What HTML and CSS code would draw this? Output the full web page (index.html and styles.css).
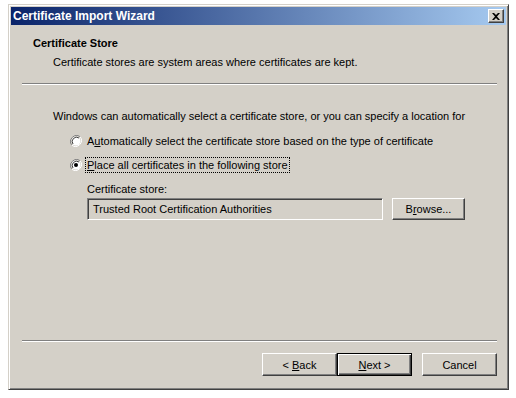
FILE: index.html
```html
<!DOCTYPE html>
<html lang="en">
<head>
    <meta charset="UTF-8">
    <title>Certificate Import Wizard</title>
    <link rel="stylesheet" href="styles.css">
</head>
<body>
<div class="window">
    <!-- Title bar -->
    <div class="titlebar">
        <span class="titlebar__text">Certificate Import Wizard</span>
        <button class="titlebar__close" type="button">
            <svg width="8" height="7" viewBox="0 0 8 7">
                <path d="M0 0h2l2 2 2-2h2L5 3.5 8 7H6L4 5 2 7H0l3-3.5z" fill="#000"/>
            </svg>
        </button>
    </div>

    <!-- Header -->
    <div class="header">
        <div class="header__title">Certificate Store</div>
        <div class="header__sub">Certificate stores are system areas where certificates are kept.</div>
    </div>
    <div class="groove"></div>

    <!-- Body -->
    <div class="content">
        <p class="content__text">Windows can automatically select a certificate store, or you can specify a location for</p>

        <div class="options">
            <label class="option">
                <svg class="radio" width="12" height="12" viewBox="0 0 12 12">
                    <path d="M10.2 1.8A6 6 0 0 0 1.8 10.2" stroke="#808080" fill="none"/>
                    <path d="M1.8 10.2A6 6 0 0 0 10.2 1.8" stroke="#fff" fill="none"/>
                    <circle cx="6" cy="6" r="4.5" fill="#fff"/>
                    <path d="M9 3A4.3 4.3 0 0 0 3 9" stroke="#404040" fill="none"/>
                </svg>
                <span class="option__label">A<u>u</u>tomatically select the certificate store based on the type of certificate</span>
            </label>
            <label class="option">
                <svg class="radio" width="12" height="12" viewBox="0 0 12 12">
                    <path d="M10.2 1.8A6 6 0 0 0 1.8 10.2" stroke="#808080" fill="none"/>
                    <path d="M1.8 10.2A6 6 0 0 0 10.2 1.8" stroke="#fff" fill="none"/>
                    <circle cx="6" cy="6" r="4.5" fill="#fff"/>
                    <path d="M9 3A4.3 4.3 0 0 0 3 9" stroke="#404040" fill="none"/>
                    <circle cx="6" cy="6" r="2" fill="#000"/>
                </svg>
                <span class="option__label option__label--focus"><u>P</u>lace all certificates in the following store</span>
            </label>
        </div>

        <div class="store">
            <div class="store__label">Certificate store:</div>
            <div class="store__row">
                <div class="field">Trusted Root Certification Authorities</div>
                <button class="btn btn--browse" type="button">B<u>r</u>owse...</button>
            </div>
        </div>
    </div>

    <!-- Footer -->
    <div class="footer">
        <div class="groove"></div>
        <div class="footer__buttons">
            <button class="btn" type="button">&lt; <u>B</u>ack</button>
            <button class="btn btn--default" type="button"><u>N</u>ext &gt;</button>
            <button class="btn btn--cancel" type="button">Cancel</button>
        </div>
    </div>
</div>
</body>
</html>
```

FILE: styles.css
```css
:root {
    /* COLORS */
    --face: #d4d0c8;
    --shadow: #808080;
    --dark: #404040;
    --light: #fff;
    --navy: #0a246a;
    --sky: #a6caf0;

    font-family: "Liberation Sans", Arial, sans-serif;
    font-size: 11px;
}

body {
    margin: 0;
    padding: 4px 0 0 8px;
    background-color: #fff;
    color: #000;
}

.window {
    background-color: var(--face);
    border: 1px solid;
    border-color: var(--face) var(--dark) var(--dark) var(--face);
    box-shadow: inset 1px 1px 0 var(--light), inset -1px -1px 0 var(--shadow);
    box-sizing: border-box;
    display: flex;
    flex-direction: column;
    height: 386px;
    padding: 2px;
    width: 501px;
}

.titlebar {
    align-items: center;
    background-image: linear-gradient(90deg, var(--navy) 0%, var(--sky) 100%);
    display: flex;
    height: 18px;
    justify-content: space-between;
    padding: 0 2px 0 2px;
}

.titlebar__text {
    color: #fff;
    font-size: 12px;
    font-weight: bold;
}

.titlebar__close {
    align-items: center;
    background-color: var(--face);
    border: 1px solid;
    border-color: var(--light) var(--dark) var(--dark) var(--light);
    box-shadow: inset -1px -1px 0 var(--shadow);
    display: flex;
    height: 14px;
    justify-content: center;
    padding: 0;
    width: 16px;
}

.header {
    padding: 12px 0 0 22px;
}

.header__title {
    font-weight: bold;
    line-height: 13px;
}

.header__sub {
    line-height: 13px;
    margin-top: 6px;
    padding-left: 20px;
}

.groove {
    border-top: 1px solid var(--shadow);
    border-bottom: 1px solid var(--light);
    margin: 14px 9px 0 11px;
}

.content {
    flex: 1;
    padding: 25px 0 0 42px;
}

.content__text {
    line-height: 13px;
    margin: 0;
}

.options {
    display: flex;
    flex-direction: column;
    gap: 8px;
    margin-top: 10px;
    padding-left: 17px;
}

.option {
    align-items: center;
    display: flex;
    gap: 3px;
    height: 16px;
}

.radio {
    flex: none;
}

.option__label {
    line-height: 14px;
    padding: 0 1px;
    border: 1px dotted transparent;
}

.option__label--focus {
    border-color: #000;
}

.store {
    padding-left: 34px;
}

.store__label {
    line-height: 13px;
    margin-top: 10px;
}

.store__row {
    display: flex;
    gap: 9px;
    margin-top: 2px;
}

.field {
    background-color: var(--face);
    border: 1px solid;
    border-color: var(--shadow) var(--light) var(--light) var(--shadow);
    box-shadow: inset 1px 1px 0 var(--dark), inset -1px -1px 0 var(--face);
    box-sizing: border-box;
    height: 22px;
    line-height: 20px;
    padding: 0 5px;
    width: 296px;
}

.btn {
    background-color: var(--face);
    border: 1px solid;
    border-color: var(--light) var(--dark) var(--dark) var(--light);
    box-shadow: inset -1px -1px 0 var(--shadow);
    box-sizing: border-box;
    color: #000;
    font-family: inherit;
    font-size: 11px;
    height: 23px;
    padding: 0;
    width: 75px;
}

.btn--browse {
    height: 22px;
    width: 73px;
}

.btn--default {
    border-color: #000;
    box-shadow: inset 1px 1px 0 var(--light), inset -1px -1px 0 var(--dark), inset -2px -2px 0 var(--shadow);
}

.btn--cancel {
    margin-left: 10px;
}

.footer {
    padding-bottom: 11px;
}

.footer .groove {
    margin-top: 0;
}

.footer__buttons {
    display: flex;
    justify-content: flex-end;
    margin-top: 11px;
    padding-right: 9px;
}
```
